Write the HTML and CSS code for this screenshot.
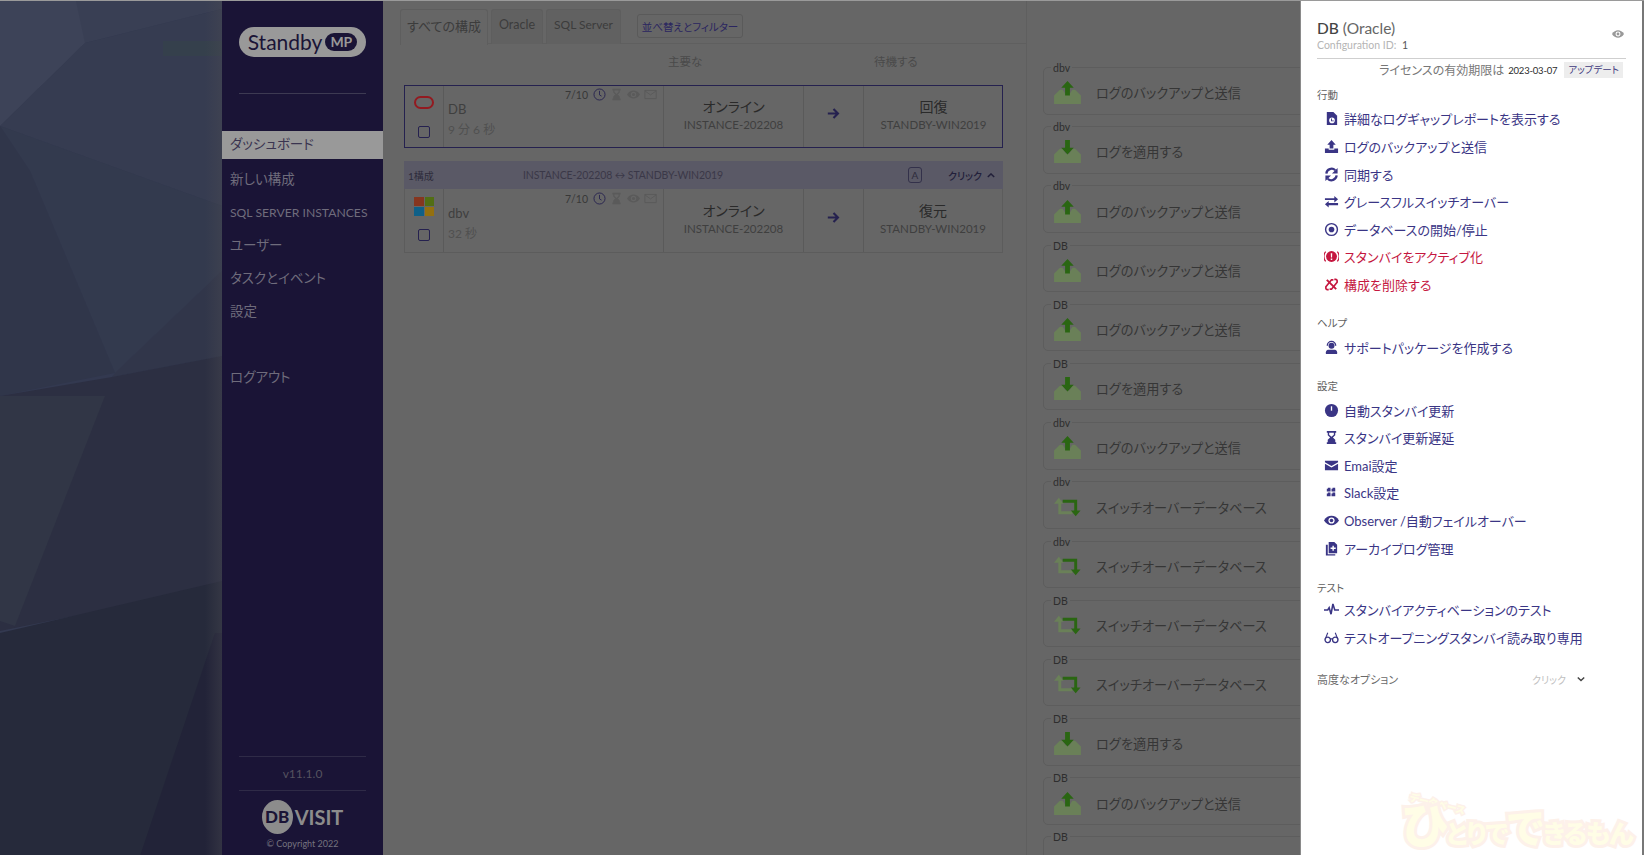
FILE: index.html
```html
<!DOCTYPE html>
<html lang="ja">
<head>
<meta charset="utf-8">
<title>Standby MP</title>
<link rel="stylesheet" href="styles.css">
</head>
<body>
<svg class="sprite" width="0" height="0">
  <symbol id="i-report" viewBox="0 0 16 16"><path d="M3 1h7l4 4v10H3z"/><circle cx="8.5" cy="10" r="3" fill="#fff"/><path d="M8.5 8v2h2v1h-3V8z"/></symbol>
  <symbol id="i-upload" viewBox="0 0 16 16"><path d="M8 1l4.500 5H10v4H6V6H3.500z"/><path d="M1 10h4v1.500h6V10h4v5H1z"/></symbol>
  <symbol id="i-sync" viewBox="0 0 16 16"><path d="M2.500 7A5.600 5.600 0 0 1 12 3.500M13.500 9A5.600 5.600 0 0 1 4 12.500" fill="none" stroke="currentColor" stroke-width="2.400"/><path d="M14.500 1v6h-6zM1.500 15V9h6z"/></symbol>
  <symbol id="i-swap" viewBox="0 0 16 16"><path d="M1 4.500h10V2l4 3.500L11 9V6.500H1zM15 9.500H5V7.500L1 11l4 3.500V12h10z"/></symbol>
  <symbol id="i-target" viewBox="0 0 16 16"><circle cx="8" cy="8" r="6.300" fill="none" stroke="currentColor" stroke-width="1.500"/><circle cx="8" cy="8" r="3"/></symbol>
  <symbol id="i-alert" viewBox="0 0 16 16"><circle cx="8" cy="8" r="5.800"/><path d="M7.200 4.500h1.600l-.2 4.500H7.400zM7.200 10h1.600v1.600H7.200z" fill="#fff"/><path d="M1.800 2.800a8 8 0 0 0 0 10.400M14.200 2.800a8 8 0 0 1 0 10.400" fill="none" stroke="currentColor" stroke-width="1.300"/></symbol>
  <symbol id="i-unlink" viewBox="0 0 16 16"><path d="M3 3l10 10" fill="none" stroke="currentColor" stroke-width="2"/><path d="M5 13.500H3.500A1.500 1.500 0 0 1 2 12V10.500L8 3h2M11 2.500h1.500A1.500 1.500 0 0 1 14 4v1.500L8 13H6" fill="none" stroke="currentColor" stroke-width="1.800"/></symbol>
  <symbol id="i-support" viewBox="0 0 16 16"><circle cx="8" cy="6" r="3.200"/><path d="M3.500 6a4.500 4.500 0 0 1 9 0" fill="none" stroke="currentColor" stroke-width="1.400"/><path d="M2 15v-2c0-2 2-2.500 3-2.500h6c1 0 3 .5 3 2.500v2z"/></symbol>
  <symbol id="i-clock" viewBox="0 0 16 16"><circle cx="8" cy="8" r="7"/><path d="M7.300 3.500h1.400v4.700H7.300z" fill="#fff"/></symbol>
  <symbol id="i-hourglass" viewBox="0 0 16 16"><path d="M3 1h10v2h-1v2.500L9.500 8l2.500 2.500V13h1v2H3v-2h1v-2.500L6.500 8 4 5.500V3H3z"/><path d="M5.500 3v2l2.500 2.300L10.500 5V3z" fill="var(--hole, #fff)"/></symbol>
  <symbol id="i-mail" viewBox="0 0 16 16"><path d="M1 3h14v1.500L8 8.500 1 4.500zM1 6.200l7 4 7-4V13H1z"/></symbol>
  <symbol id="i-slack" viewBox="0 0 16 16"><path d="M5.500 3v10M10.500 3v10M3 5.500h10M3 10.500h10" fill="none" stroke="currentColor" stroke-width="2.800" stroke-dasharray="4 1"/></symbol>
  <symbol id="i-eye" viewBox="0 0 16 16"><path d="M0 8c2-3.500 5-5 8-5s6 1.500 8 5c-2 3.500-5 5-8 5s-6-1.500-8-5z"/><circle cx="8" cy="8" r="3.300" fill="var(--hole, #fff)"/><circle cx="8" cy="8" r="1.900"/></symbol>
  <symbol id="i-archive" viewBox="0 0 16 16"><path d="M5 1h6l3 3v9H5z"/><path d="M2 4h2v10h8v1.500H2z"/><path d="M9 5h1.500v2h2v1.500h-2v2H9v-2H7V7h2z" fill="#fff"/></symbol>
  <symbol id="i-pulse" viewBox="0 0 16 16"><path d="M0 8.500h4l1.500-2.500 2 7 2-11 2 6.500h4.500" fill="none" stroke="currentColor" stroke-width="1.700"/></symbol>
  <symbol id="i-glasses" viewBox="0 0 16 16"><circle cx="4" cy="10.500" r="2.900" fill="none" stroke="currentColor" stroke-width="1.400"/><circle cx="12" cy="10.500" r="2.900" fill="none" stroke="currentColor" stroke-width="1.400"/><path d="M1.200 10L4 3M14.800 10L12 3M6.500 9.500h3" fill="none" stroke="currentColor" stroke-width="1.200"/></symbol>
  <symbol id="i-up" viewBox="0 0 28 24"><path d="M0 24v-9l6-6h3l3 5h4l3-5h3l6 6v9z" fill="#6a8058"/><path d="M14 0l6.500 7h-4v8h-5V7h-4z" fill="#2a6612"/></symbol>
  <symbol id="i-down" viewBox="0 0 28 24"><path d="M0 24v-9l6-6h3l3 5h4l3-5h3l6 6v9z" fill="#6a8058"/><path d="M11.500 0h5v8h4L14 15 7.500 8h4z" fill="#2a6612"/></symbol>
  <symbol id="i-switch" viewBox="0 0 28 20"><path d="M5 0l5 6H7.500v8H19v3H4.500V6H0z" fill="#6a8058"/><path d="M9 2h15v11h3.500l-5 6-5-6H21V5H9z" fill="#2a6612"/></symbol>
  <symbol id="i-arrow" viewBox="0 0 16 16"><path d="M1 8h12M8 2.500L13.500 8 8 13.500" fill="none" stroke="currentColor" stroke-width="2.600"/></symbol>
  <symbol id="i-clockline" viewBox="0 0 16 16"><circle cx="8" cy="8" r="6.800" fill="none" stroke="currentColor" stroke-width="1.100"/><path d="M8 3.500V8.500L10.500 10" fill="none" stroke="currentColor" stroke-width="1.100"/></symbol>
  <symbol id="i-mailline" viewBox="0 0 16 16"><path d="M1 3h14v10H1zM1 3.500l7 5 7-5" fill="none" stroke="currentColor" stroke-width="1.200"/></symbol>
</svg>

<div class="app">
  <div class="backdrop">
    <svg class="poly" viewBox="0 0 222 855" preserveAspectRatio="none">
      <defs>
        <linearGradient id="edge" x1="0" x2="1" y1="0" y2="0"><stop offset="0" stop-color="#4a4a52" stop-opacity="0"/><stop offset="1" stop-color="#4a4a52" stop-opacity=".4"/></linearGradient>
      </defs>
      <rect width="222" height="855" fill="#333950"/>
      <path d="M0 0H222V8L85 42 0 125z" fill="#393f54"/>
      <path d="M0 0H76L85 42 0 125z" fill="#3d4358"/>
      <path d="M85 42L222 8V205L0 125z" fill="#363c51"/>
      <path d="M0 125L222 205V270L115 372 30 170z" fill="#333a4e"/>
      <path d="M0 125L30 170 115 372 0 395z" fill="#30364a"/>
      <path d="M115 372L222 270V355L112 376z" fill="#31364a"/>
      <path d="M0 395L112 376 222 355V585L0 630z" fill="#2c2f42"/>
      <path d="M0 395H105L15 625 0 620z" fill="#313646"/>
      <path d="M0 632L222 580V855H0z" fill="#262a3b"/>
      <path d="M215 632L140 855H222V632z" fill="#222338"/>
      <path d="M163 40H222V55H163z" fill="#35404c"/>
      <rect x="205" width="17" height="855" fill="url(#edge)"/>
    </svg>
  </div>

  <nav class="sidebar">
    <div class="brand"><span class="brand-name">Standby</span><span class="brand-mp">MP</span></div>
    <div class="rule"></div>
    <a class="nav active">ダッシュボード</a>
    <a class="nav">新しい構成</a>
    <a class="nav nav-small">SQL SERVER INSTANCES</a>
    <a class="nav">ユーザー</a>
    <a class="nav">タスクとイベント</a>
    <a class="nav">設定</a>
    <a class="nav logout">ログアウト</a>
    <div class="side-foot">
      <div class="version">v11.1.0</div>
      <div class="dbvisit"><span class="db-circle">DB</span><span class="db-word">VISIT</span></div>
      <div class="copy">© Copyright 2022</div>
    </div>
  </nav>

  <main class="main">
    <section class="configs">
      <div class="tabs">
        <span class="tab tab-active">すべての構成</span>
        <span class="tab tab-oracle">Oracle</span>
        <span class="tab tab-sql">SQL Server</span>
        <button class="filter">並べ替えとフィルター</button>
      </div>
      <div class="col-heads"><span class="head-primary">主要な</span><span class="head-standby">待機する</span></div>

      <div class="row row-selected">
        <div class="cell cell-logo">
          <span class="oracle-logo"></span>
          <span class="check"></span>
        </div>
        <div class="cell cell-info">
          <div class="metrics"><span class="ratio">7/10</span><svg class="m-icon m-blue"><use href="#i-clockline"/></svg><svg class="m-icon m-faint"><use href="#i-hourglass"/></svg><svg class="m-icon m-faint"><use href="#i-eye"/></svg><svg class="m-icon m-faint"><use href="#i-mailline"/></svg></div>
          <div class="cfg-name">DB</div>
          <div class="cfg-time">9 分 6 秒</div>
        </div>
        <div class="cell cell-status"><div class="state">オンライン</div><div class="host">INSTANCE-202208</div></div>
        <div class="cell cell-arrow"><svg class="arrow"><use href="#i-arrow"/></svg></div>
        <div class="cell cell-status"><div class="state">回復</div><div class="host">STANDBY-WIN2019</div></div>
      </div>

      <div class="group">
        <span class="group-count">1構成</span>
        <span class="group-title">INSTANCE-202208 ↔ STANDBY-WIN2019</span>
        <span class="a-box">A</span>
        <span class="group-click">クリック</span>
        <svg class="chev" viewBox="0 0 10 6"><path d="M1 5l4-4 4 4" fill="none" stroke="currentColor" stroke-width="1.800"/></svg>
      </div>

      <div class="row row-plain">
        <div class="cell cell-logo">
          <span class="ms-logo"><i class="ms-r"></i><i class="ms-g"></i><i class="ms-b"></i><i class="ms-y"></i></span>
          <span class="check"></span>
        </div>
        <div class="cell cell-info">
          <div class="metrics"><span class="ratio">7/10</span><svg class="m-icon m-blue"><use href="#i-clockline"/></svg><svg class="m-icon m-faint"><use href="#i-hourglass"/></svg><svg class="m-icon m-faint"><use href="#i-eye"/></svg><svg class="m-icon m-faint"><use href="#i-mailline"/></svg></div>
          <div class="cfg-name">dbv</div>
          <div class="cfg-time">32 秒</div>
        </div>
        <div class="cell cell-status"><div class="state">オンライン</div><div class="host">INSTANCE-202208</div></div>
        <div class="cell cell-arrow"><svg class="arrow"><use href="#i-arrow"/></svg></div>
        <div class="cell cell-status"><div class="state">復元</div><div class="host">STANDBY-WIN2019</div></div>
      </div>
    </section>

    <section class="events">
      <div class="card"><span class="card-tag">dbv</span><svg class="card-icon"><use href="#i-up"/></svg><span class="card-text">ログのバックアップと送信</span></div>
      <div class="card"><span class="card-tag">dbv</span><svg class="card-icon"><use href="#i-down"/></svg><span class="card-text">ログを適用する</span></div>
      <div class="card"><span class="card-tag">dbv</span><svg class="card-icon"><use href="#i-up"/></svg><span class="card-text">ログのバックアップと送信</span></div>
      <div class="card"><span class="card-tag">DB</span><svg class="card-icon"><use href="#i-up"/></svg><span class="card-text">ログのバックアップと送信</span></div>
      <div class="card"><span class="card-tag">DB</span><svg class="card-icon"><use href="#i-up"/></svg><span class="card-text">ログのバックアップと送信</span></div>
      <div class="card"><span class="card-tag">DB</span><svg class="card-icon"><use href="#i-down"/></svg><span class="card-text">ログを適用する</span></div>
      <div class="card"><span class="card-tag">dbv</span><svg class="card-icon"><use href="#i-up"/></svg><span class="card-text">ログのバックアップと送信</span></div>
      <div class="card"><span class="card-tag">dbv</span><svg class="card-icon"><use href="#i-switch"/></svg><span class="card-text">スイッチオーバーデータベース</span></div>
      <div class="card"><span class="card-tag">dbv</span><svg class="card-icon"><use href="#i-switch"/></svg><span class="card-text">スイッチオーバーデータベース</span></div>
      <div class="card"><span class="card-tag">DB</span><svg class="card-icon"><use href="#i-switch"/></svg><span class="card-text">スイッチオーバーデータベース</span></div>
      <div class="card"><span class="card-tag">DB</span><svg class="card-icon"><use href="#i-switch"/></svg><span class="card-text">スイッチオーバーデータベース</span></div>
      <div class="card"><span class="card-tag">DB</span><svg class="card-icon"><use href="#i-down"/></svg><span class="card-text">ログを適用する</span></div>
      <div class="card"><span class="card-tag">DB</span><svg class="card-icon"><use href="#i-up"/></svg><span class="card-text">ログのバックアップと送信</span></div>
      <div class="card"><span class="card-tag">DB</span></div>
    </section>
  </main>

  <aside class="panel">
    <div class="panel-head">
      <div class="panel-title"><b>DB</b> (Oracle)</div>
      <svg class="panel-eye"><use href="#i-eye"/></svg>
    </div>
    <div class="panel-id">Configuration ID: <span>1</span></div>
    <div class="license"><span class="lic-text">ライセンスの有効期限は</span><span class="lic-date">2023-03-07</span><span class="lic-btn">アップデート</span></div>

    <div class="sec-label">行動</div>
    <a class="item"><svg class="ic"><use href="#i-report"/></svg>詳細なログギャップレポートを表示する</a>
    <a class="item"><svg class="ic"><use href="#i-upload"/></svg>ログのバックアップと送信</a>
    <a class="item"><svg class="ic"><use href="#i-sync"/></svg>同期する</a>
    <a class="item"><svg class="ic"><use href="#i-swap"/></svg>グレースフルスイッチオーバー</a>
    <a class="item"><svg class="ic"><use href="#i-target"/></svg>データベースの開始/停止</a>
    <a class="item danger"><svg class="ic"><use href="#i-alert"/></svg>スタンバイをアクティブ化</a>
    <a class="item danger"><svg class="ic"><use href="#i-unlink"/></svg>構成を削除する</a>

    <div class="sec-label sec-gap">ヘルプ</div>
    <a class="item"><svg class="ic"><use href="#i-support"/></svg>サポートパッケージを作成する</a>

    <div class="sec-label sec-gap">設定</div>
    <a class="item"><svg class="ic"><use href="#i-clock"/></svg>自動スタンバイ更新</a>
    <a class="item"><svg class="ic"><use href="#i-hourglass"/></svg>スタンバイ更新遅延</a>
    <a class="item"><svg class="ic"><use href="#i-mail"/></svg>Emai設定</a>
    <a class="item"><svg class="ic"><use href="#i-slack"/></svg>Slack設定</a>
    <a class="item"><svg class="ic"><use href="#i-eye"/></svg>Observer /自動フェイルオーバー</a>
    <a class="item"><svg class="ic"><use href="#i-archive"/></svg>アーカイブログ管理</a>

    <div class="sec-label sec-gap sec-test">テスト</div>
    <a class="item"><svg class="ic"><use href="#i-pulse"/></svg>スタンバイアクティベーションのテスト</a>
    <a class="item"><svg class="ic"><use href="#i-glasses"/></svg>テストオープニングスタンバイ読み取り専用</a>

    <div class="advanced">
      <span class="adv-label">高度なオプション</span>
      <span class="adv-click">クリック</span>
      <svg class="adv-chev" viewBox="0 0 10 6"><path d="M1 1l4 4 4-4" fill="none" stroke="currentColor" stroke-width="1.800"/></svg>
    </div>
  </aside>

  <div class="watermark" aria-hidden="true">
    <span class="wm-top">データベース</span>
    <span class="wm-main"><span class="wm-big">ひ</span>とりで<span class="wm-mid">で</span>きるもん</span>
  </div>
</div>
</body>
</html>
```

FILE: styles.css
```css
* { box-sizing: border-box; }
html, body { margin: 0; height: 100%; overflow: hidden; }
body {
  font-family: Lato, "Noto Sans CJK JP", sans-serif;
  font-feature-settings: "palt";
  background: #666;
  color: #3c3c3c;
}
.sprite { position: absolute; }
.app {
  display: flex;
  width: 1644px;
  height: 855px;
  position: relative;
  overflow: hidden;
  border-top: 1px solid #9a9a9a;
}

/* backdrop */
.backdrop { width: 222px; flex: none; }
.poly { display: block; width: 222px; height: 855px; }

/* sidebar */
.sidebar {
  width: 161px;
  flex: none;
  background: #1a1436;
  display: flex;
  flex-direction: column;
  color: #6f6c7c;
}
.brand {
  margin: 26px 17px 0;
  height: 30px;
  border-radius: 15px;
  background: #999;
  display: flex;
  align-items: center;
  justify-content: center;
  gap: 3px;
  color: #1a1436;
}
.brand-name { font-size: 21px; line-height: 30px; }
.brand-mp {
  background: #1a1436;
  color: #999;
  font-size: 14px;
  font-weight: 700;
  border-radius: 10px;
  padding: 0 5px;
  line-height: 18px;
}
.rule { margin: 36px 17px 0; height: 1px; background: #3d3a52; }
.nav {
  display: block;
  height: 33px;
  line-height: 33px;
  padding-left: 8px;
  font-size: 13.500px;
  white-space: nowrap;
}
.nav.active {
  margin-top: 37px;
  margin-bottom: 4px;
  height: 28px;
  line-height: 26px;
  background: #999;
  color: #3a3450;
}
.nav-small { font-size: 12.200px; }
.logout { margin-top: 33px; }
.side-foot { margin-top: auto; padding: 0 17px; text-align: center; }
.version {
  height: 35px;
  line-height: 33px;
  font-size: 12px;
  color: #55525f;
  border-top: 1px solid #2f2b47;
  border-bottom: 1px solid #2f2b47;
}
.dbvisit { display: flex; justify-content: center; align-items: center; gap: 2px; margin-top: 9px; }
.db-circle {
  width: 31px;
  height: 34px;
  border-radius: 50%;
  background: #8c8c8c;
  color: #1a1436;
  font-size: 17px;
  font-weight: 900;
  line-height: 34px;
  text-align: center;
}
.db-word { font-size: 20px; font-weight: 700; color: #8c8c8c; }
.copy { font-size: 9px; color: #75737f; line-height: 12px; margin: 4px 0 5px; }

/* main */
.main { flex: 1; display: flex; min-width: 0; overflow: hidden; background: #666; }
.configs { width: 643px; flex: none; padding: 8px 0 0 17px; }
.tabs { display: flex; align-items: flex-start; height: 35px; border-bottom: 1px solid #5f5f5f; }
.tab {
  height: 35px;
  border: 1px solid #5e5e5e;
  border-bottom: none;
  border-radius: 3px 3px 0 0;
  background: #616161;
  margin-right: 3px;
  display: flex;
  justify-content: center;
  color: #3c3c3c;
  font-size: 12.500px;
  line-height: 29px;
  white-space: nowrap;
}
.tab-active { width: 88px; background: #666; font-size: 13px; line-height: 32px; height: 36px; }
.tab-oracle { width: 52px; }
.tab-sql { width: 75px; font-size: 12px; }
.filter {
  margin: 5px 0 0 13px;
  width: 106px;
  height: 24px;
  padding: 0;
  background: #666;
  border: 1px solid #5a5a5a;
  border-radius: 3px;
  color: #2a2560;
  font: 10.500px Lato, "Noto Sans CJK JP", sans-serif;
  font-feature-settings: "palt";
  white-space: nowrap;
}
.col-heads { position: relative; height: 41px; font-size: 11.500px; color: #4a4a4a; }
.head-primary { position: absolute; left: 268px; top: 9px; width: 34px; text-align: center; white-space: nowrap; }
.head-standby { position: absolute; left: 474px; top: 9px; width: 34px; text-align: center; white-space: nowrap; }
.row {
  margin-left: 4px;
  width: 599px;
  height: 63px;
  display: grid;
  grid-template-columns: 39px 220px 140px 60px 140px;
}
.row-selected { outline: 1px solid #25214f; outline-offset: -1px; }
.row-plain { height: 64px; border: 1px solid #5c5c5c; border-top: none; grid-template-columns: 38px 220px 140px 60px 139px; }
.cell { border-left: 1px solid #5a5a5a; height: 100%; }
.cell:first-child { border-left: none; }
.cell-logo { display: flex; flex-direction: column; align-items: center; padding-top: 11px; }
.oracle-logo {
  width: 20px;
  height: 13px;
  border: 2px solid #931a20;
  border-radius: 6.500px;
}
.check {
  width: 12px;
  height: 12px;
  border: 1.500px solid #25214f;
  border-radius: 2px;
  margin-top: 17px;
}
.ms-logo {
  width: 20px;
  height: 19px;
  display: grid;
  grid-template-columns: 1fr 1fr;
  gap: 1px;
  margin-top: -3px;
}
.ms-logo i { display: block; }
.ms-r { background: #86361f; }
.ms-g { background: #526e14; }
.ms-b { background: #0f6088; }
.ms-y { background: #94700f; }
.row-plain .check { margin-top: 13px; }
.cell-info { padding: 2px 0 0 4px; }
.metrics { display: flex; justify-content: flex-end; align-items: center; height: 15px; padding-right: 6px; gap: 4px; }
.ratio { font-size: 10.500px; color: #383838; margin-right: 1px; }
.m-icon { width: 13px; height: 13px; }
.m-blue { color: #25214f; }
.m-faint { color: #5a5a5a; fill: #5a5a5a; --hole: #666; }
.cfg-name { font-size: 13px; line-height: 18px; margin-top: -2px; color: #3f3f3f; }
.cfg-time { font-size: 12px; line-height: 16px; color: #505050; margin-top: 4px; }
.cell-status { text-align: center; padding-top: 11px; }
.state { font-size: 14px; line-height: 21px; color: #2a2a2a; }
.host { font-size: 11.500px; line-height: 16px; color: #3f3f3f; }
.cell-arrow { display: flex; align-items: center; justify-content: center; padding-bottom: 6px; }
.arrow { width: 13px; height: 13px; color: #25214f; }
.group {
  margin: 13px 0 0 4px;
  width: 599px;
  height: 28px;
  background: #5a5966;
  display: flex;
  align-items: center;
  padding: 0 5px 0 4px;
  color: #2e2c3c;
}
.group-count { font-size: 10px; width: 115px; }
.group-title { font-size: 10.500px; letter-spacing: -.1px; color: #3a3848; width: 385px; white-space: nowrap; }
.a-box {
  width: 14px;
  height: 16px;
  border: 1px solid #33314a;
  border-radius: 3px;
  text-align: center;
  font-size: 10px;
  line-height: 14px;
  margin-right: 26px;
}
.group-click { font-size: 10px; font-weight: 500; color: #22203a; white-space: nowrap; }
.chev { width: 8px; height: 5px; margin-left: 5px; color: #22203a; }

/* events */
.events { flex: 1; border-left: 1px solid #5f5f5f; padding: 66px 0 0 16px; min-width: 0; }
.card {
  position: relative;
  width: 300px;
  height: 47.500px;
  margin-bottom: 11.700px;
  border: 1px solid #5d5d5d;
  border-radius: 5px;
  display: flex;
  align-items: center;
  padding: 4px 0 0 10px;
}
.card-tag {
  position: absolute;
  left: 7px;
  top: -6px;
  background: #666;
  padding: 0 2px;
  font-size: 10.500px;
  line-height: 12px;
  color: #2e2e2e;
}
.card-icon { width: 27px; height: 23px; flex: none; }
.card-text { margin-left: 15px; font-size: 13.200px; color: #363636; white-space: nowrap; }

/* panel */
.panel {
  width: 344px;
  flex: none;
  background: #fff;
  position: relative;
  border-left: 1px solid #8a8a8a;
  border-right: 2px solid #777;
  padding: 17px 16px 0 16px;
  color: #6b6b6b;
}
.panel-head { display: flex; justify-content: space-between; align-items: center; height: 20px; }
.panel-title { font-size: 15.500px; color: #666; line-height: 20px; }
.panel-title b { color: #444; font-weight: 500; }
.panel-eye { width: 14px; height: 12px; margin: 12px 1px 0 0; fill: #999; color: #999; }
.panel-id { font-size: 10.500px; color: #b5b5b5; line-height: 14px; height: 14px; }
.panel-id span { color: #555; margin-left: 3px; }
.license {
  margin-top: 6px;
  border-top: 1px solid #cfcfcf;
  height: 21px;
  display: flex;
  justify-content: flex-end;
  align-items: center;
  padding-right: 3px;
  white-space: nowrap;
}
.lic-text { font-size: 12px; color: #777; }
.lic-date { font-size: 9.500px; letter-spacing: -.2px; color: #2b2b2b; margin-left: 4px; margin-top: 2px; }
.lic-btn { font-size: 9.500px; color: #3f3a80; background: #ededed; height: 16px; line-height: 16px; padding: 0 4px; margin-left: 7px; margin-top: 2px; }
.sec-label { font-size: 10.500px; line-height: 14px; color: #5f5f5f; margin-top: 9px; margin-bottom: 3.200px; }
.sec-gap { margin-top: 18px; }
.sec-test { margin-top: 19px; margin-bottom: 1.200px; }
.item {
  display: flex;
  align-items: center;
  height: 27.600px;
  font-size: 13px;
  color: #3a3585;
  white-space: nowrap;
}
.item.danger { color: #c5173f; }
.ic { width: 15px; height: 15px; flex: none; margin: 0 5px 0 7px; fill: currentColor; }
.advanced { display: flex; align-items: center; margin-top: 21px; height: 14px; white-space: nowrap; }
.adv-label { font-size: 11px; color: #6a6a6a; width: 215px; }
.adv-click { font-size: 10px; color: #c0c0c0; }
.adv-chev { width: 8px; height: 6px; margin-left: 11px; color: #444; }

/* watermark */
.watermark {
  position: absolute;
  left: 1402px;
  top: 786px;
  width: 240px;
  height: 68px;
  pointer-events: none;
  font-family: "Noto Sans CJK JP", sans-serif;
  font-weight: 900;
  color: #fffde6;
  -webkit-text-stroke: 6px #fdf1ea;
  paint-order: stroke fill;
}
.wm-top {
  position: absolute;
  left: 10px;
  top: 2px;
  font-size: 10px;
  transform: rotate(14deg);
  transform-origin: left top;
  white-space: nowrap;
  -webkit-text-stroke: 3px #fdf1ea;
}
.wm-main { position: absolute; left: 0; top: 11px; font-size: 25.500px; line-height: 48px; white-space: nowrap; letter-spacing: -1px; }
.wm-big { font-size: 48px; }
.wm-mid { font-size: 40px; }
```
